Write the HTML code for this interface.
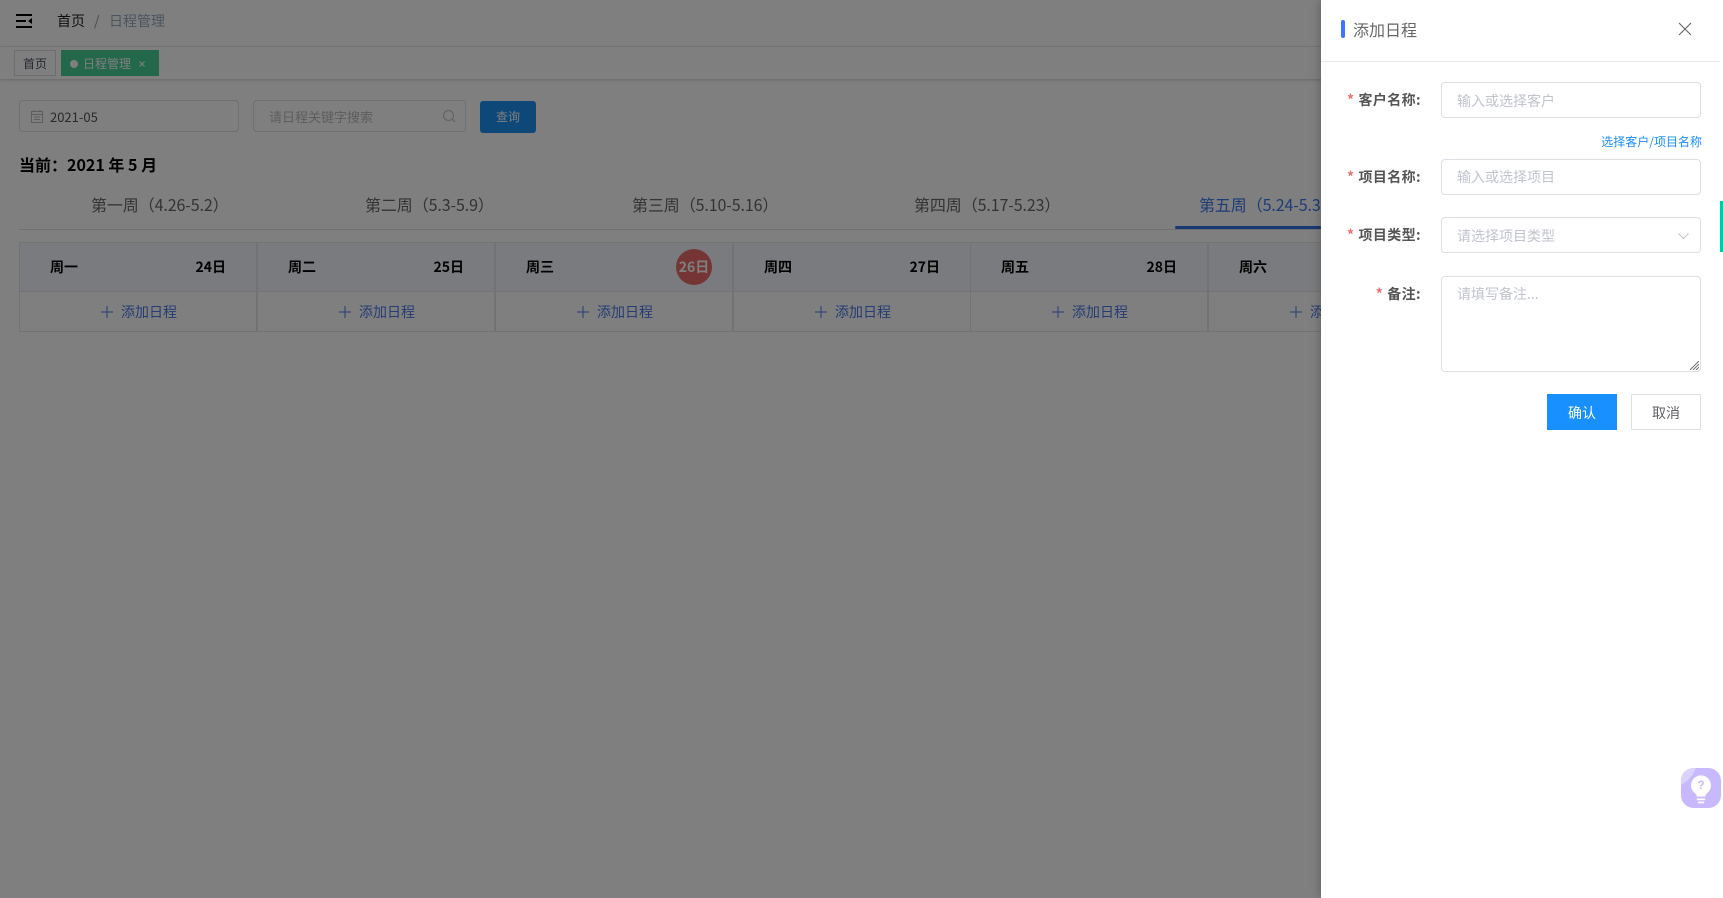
<!DOCTYPE html>
<html lang="zh-CN">
<head>
<meta charset="utf-8">
<title>日程管理</title>
<style>
*{box-sizing:border-box;margin:0;padding:0}
html,body{width:1723px;height:898px;overflow:hidden;background:#fff}
body{position:relative;font-family:"Noto Sans CJK SC","Liberation Sans",sans-serif;font-size:14px;color:#333}
.a{position:absolute;white-space:nowrap}
.t14{font-size:14px;line-height:20px;height:20px}
.t12{font-size:12px;line-height:16px;height:16px}
.t16{font-size:16px;line-height:24px;height:24px}
.tab{top:192px;color:#666;letter-spacing:-.1px}
.cell{position:absolute;top:242px;height:90px;width:238px;border:1px solid #e6e6e6}
.cell .h{position:absolute;left:0;right:0;top:0;height:49px;background:#f4f6fc;border-bottom:1px solid #e6e6e6}
.cell .w{position:absolute;left:30px;top:14px;font-size:14px;line-height:20px;font-weight:700;color:#000}
.cell .d{position:absolute;right:30px;top:14px;font-size:14px;line-height:20px;font-weight:700;color:#000}
.cell .add{position:absolute;left:81px;top:59px;height:20px;line-height:20px;font-size:14px;color:#4a78e8;white-space:nowrap}
.cell .add svg{position:absolute;left:0;top:4px}
.cell .add span{position:absolute;left:20px;top:0}
#mask{position:absolute;left:0;top:0;width:1723px;height:898px;background:rgba(0,0,0,.5)}
#drawer{position:absolute;left:1321px;top:0;width:402px;height:898px;background:#fff;box-shadow:-2px 0 8px rgba(0,0,0,.2)}
.inp{position:absolute;left:120px;width:260px;height:36px;border:1px solid #dcdfe6;border-radius:4px;background:#fff}
.ph{position:absolute;left:15px;top:7px;font-size:14px;line-height:20px;color:#c0c4cc;white-space:nowrap}
.lab{position:absolute;right:302px;font-size:14px;line-height:20px;font-weight:700;color:#555;white-space:nowrap;letter-spacing:.4px}
.lab i{font-style:normal;color:#f56c6c;margin-right:4px;font-weight:700}
</style>
</head>
<body>
<!-- header -->
<div class="a" style="left:0;top:0;width:1723px;height:46px;background:#fff;box-shadow:0 1px 4px rgba(0,0,0,.1)"></div>
<svg class="a" style="left:16px;top:14px" width="16" height="14" viewBox="0 0 16 14"><path d="M0 1h16M0 7h10M0 13h16" stroke="#000" stroke-width="2" fill="none"/><path d="M16 4v6l-4-3z" fill="#000"/></svg>
<div class="a t14" style="left:57px;top:11px;color:#222">首页</div>
<div class="a t14" style="left:94px;top:11px;color:#999">/</div>
<div class="a t14" style="left:109px;top:11px;color:#97a8be">日程管理</div>

<!-- tags -->
<div class="a" style="left:0;top:47px;width:1723px;height:32px;background:#fff;box-shadow:0 1px 3px rgba(0,0,0,.2)"></div>
<div class="a t12" style="left:14px;top:50px;width:42px;height:26px;border:1px solid #d8dce5;line-height:25px;text-align:center;color:#495060">首页</div>
<div class="a" style="left:61px;top:50px;width:98px;height:26px;background:#48d098"></div>
<div class="a" style="left:70px;top:60px;width:8px;height:8px;border-radius:50%;background:#fff"></div>
<div class="a t12" style="left:83px;top:56px;color:#fff">日程管理</div>
<svg class="a" style="left:139px;top:61px" width="6" height="6" viewBox="0 0 6 6"><path d="M.5.5l5 5M5.500.5l-5 5" stroke="#fff" stroke-width="1" fill="none"/></svg>

<!-- filters -->
<div class="a" style="left:19px;top:100px;width:220px;height:32px;border:1px solid #dcdfe6;border-radius:4px"></div>
<svg class="a" style="left:31px;top:110px" width="12" height="13" viewBox="0 0 12 13"><rect x=".5" y="1.500" width="11" height="11" fill="none" stroke="#bbb"/><path d="M1 4.500h10M3 7h6M3 9.500h6M3 0v2M9 0v2" stroke="#bbb" fill="none"/></svg>
<div class="a" style="left:50px;top:107px;font-size:13px;line-height:20px;color:#555">2021-05</div>
<div class="a" style="left:253px;top:100px;width:213px;height:32px;border:1px solid #dcdfe6;border-radius:4px"></div>
<div class="a" style="left:269px;top:107px;font-size:13px;line-height:20px;color:#bbb">请日程关键字搜索</div>
<svg class="a" style="left:442px;top:109px" width="14" height="14" viewBox="0 0 14 14"><circle cx="6.500" cy="6.500" r="5" fill="none" stroke="#c0c4cc" stroke-width="1.100"/><path d="M10.500 10.500l2.500 2.500" stroke="#c0c4cc" stroke-width="1.100"/></svg>
<div class="a" style="left:480px;top:101px;width:56px;height:32px;background:#1a90f0;border-radius:3px;text-align:center;line-height:31px;font-size:12px;color:#fff">查询</div>

<div class="a t16" style="left:19px;top:152px;font-weight:700;color:#000">当前：2021 年 5 月</div>

<!-- tabs -->
<div class="a t16 tab" style="left:91px">第一周（4.26-5.2）</div>
<div class="a t16 tab" style="left:365px">第二周（5.3-5.9）</div>
<div class="a t16 tab" style="left:632px">第三周（5.10-5.16）</div>
<div class="a t16 tab" style="left:914px">第四周（5.17-5.23）</div>
<div class="a t16 tab" style="left:1199px;color:#3d76f0">第五周（5.24-5.30）</div>
<div class="a" style="left:19px;top:229px;width:1302px;height:1px;background:#e0e0e0"></div>
<div class="a" style="left:1175px;top:226px;width:146px;height:3px;background:#3370e8;border-radius:2px"></div>

<!-- table -->
<div class="cell" style="left:19px"><div class="h"><span class="w">周一</span><span class="d">24日</span></div><div class="add"><svg width="12" height="12" viewBox="0 0 12 12"><path d="M6 0v12M0 6h12" stroke="#4a78e8" fill="none"/></svg><span>添加日程</span></div></div>
<div class="cell" style="left:257px"><div class="h"><span class="w">周二</span><span class="d">25日</span></div><div class="add"><svg width="12" height="12" viewBox="0 0 12 12"><path d="M6 0v12M0 6h12" stroke="#4a78e8" fill="none"/></svg><span>添加日程</span></div></div>
<div class="cell" style="left:495px"><div class="h"><span class="w">周三</span><div style="position:absolute;left:180px;top:6px;width:36px;height:36px;border-radius:50%;background:#ea6a6a;color:#fff;font-weight:700;font-size:14px;line-height:36px;text-align:center">26日</div></div><div class="add"><svg width="12" height="12" viewBox="0 0 12 12"><path d="M6 0v12M0 6h12" stroke="#4a78e8" fill="none"/></svg><span>添加日程</span></div></div>
<div class="cell" style="left:733px"><div class="h"><span class="w">周四</span><span class="d">27日</span></div><div class="add"><svg width="12" height="12" viewBox="0 0 12 12"><path d="M6 0v12M0 6h12" stroke="#4a78e8" fill="none"/></svg><span>添加日程</span></div></div>
<div class="cell" style="left:970px"><div class="h"><span class="w">周五</span><span class="d">28日</span></div><div class="add"><svg width="12" height="12" viewBox="0 0 12 12"><path d="M6 0v12M0 6h12" stroke="#4a78e8" fill="none"/></svg><span>添加日程</span></div></div>
<div class="cell" style="left:1208px"><div class="h"><span class="w">周六</span></div><div class="add"><svg width="12" height="12" viewBox="0 0 12 12"><path d="M6 0v12M0 6h12" stroke="#4a78e8" fill="none"/></svg><span>添加日程</span></div></div>

<div id="mask"></div>

<!-- drawer -->
<div id="drawer">
  <div class="a" style="left:20px;top:20px;width:4px;height:18px;background:#3a76ff;border-radius:2px"></div>
  <div class="a t16" style="left:32px;top:17px;color:#666">添加日程</div>
  <svg class="a" style="left:357px;top:22px" width="14" height="14" viewBox="0 0 14 14"><path d="M1 1l12 12M13 1L1 13" stroke="#666" stroke-width="1.100" fill="none"/></svg>
  <div class="a" style="left:0;top:61px;width:399px;height:1px;background:#e8eaf0"></div>

  <div class="lab" style="top:90px"><i>*</i>客户名称:</div>
  <div class="inp" style="top:82px"><div class="ph" style="top:8px">输入或选择客户</div></div>
  <div class="a t12" style="right:21px;top:134px;color:#1890ff">选择客户/项目名称</div>

  <div class="lab" style="top:167px"><i>*</i>项目名称:</div>
  <div class="inp" style="top:159px"><div class="ph">输入或选择项目</div></div>

  <div class="lab" style="top:225px"><i>*</i>项目类型:</div>
  <div class="inp" style="top:217px"><div class="ph" style="top:8px">请选择项目类型</div>
    <svg style="position:absolute;left:236px;top:15px" width="11" height="7" viewBox="0 0 11 7"><path d="M.5.500l5 5 5-5" stroke="#c0c4cc" fill="none"/></svg>
  </div>

  <div class="lab" style="top:284px"><i>*</i>备注:</div>
  <div class="inp" style="top:276px;height:96px"><div class="ph">请填写备注...</div>
    <svg style="position:absolute;right:1px;bottom:1px" width="9" height="9" viewBox="0 0 9 9"><path d="M0 9L9 0M3 9l6-6M6 9l3-3" stroke="#555" stroke-width=".8" fill="none"/></svg>
  </div>

  <div class="a" style="left:226px;top:394px;width:70px;height:36px;background:#1890ff;color:#fff;font-size:14px;line-height:38px;text-align:center">确认</div>
  <div class="a" style="left:310px;top:394px;width:70px;height:36px;border:1px solid #dcdfe6;background:#fff;color:#606266;font-size:14px;line-height:36px;text-align:center">取消</div>
  <div class="a" style="left:399px;top:201px;width:3px;height:51px;background:#00c9a7"></div>
</div>

<!-- help icon -->
<svg class="a" style="left:1681px;top:768px" width="40" height="40" viewBox="0 0 38 38">
  <rect width="38" height="38" rx="12" fill="#c8b9ff"/>
  <path d="M12 0A12 12 0 0 0 0 12v4C6 13 12 7 14 0z" fill="#dcd2ff"/>
  <path d="M19 7a9.500 9.500 0 0 0-5.500 17.200c1 .8 1.500 1.800 1.500 3h8c0-1.200.5-2.200 1.500-3A9.500 9.500 0 0 0 19 7z" fill="#fff"/>
  <path d="M15 29h8v1.500h-8zM16 32h6v1.500h-6z" fill="#fff"/>
  <text x="19" y="20" text-anchor="middle" font-size="11" font-weight="700" fill="#c8b9ff" font-family="Liberation Sans, sans-serif">?</text>
</svg>
</body>
</html>
